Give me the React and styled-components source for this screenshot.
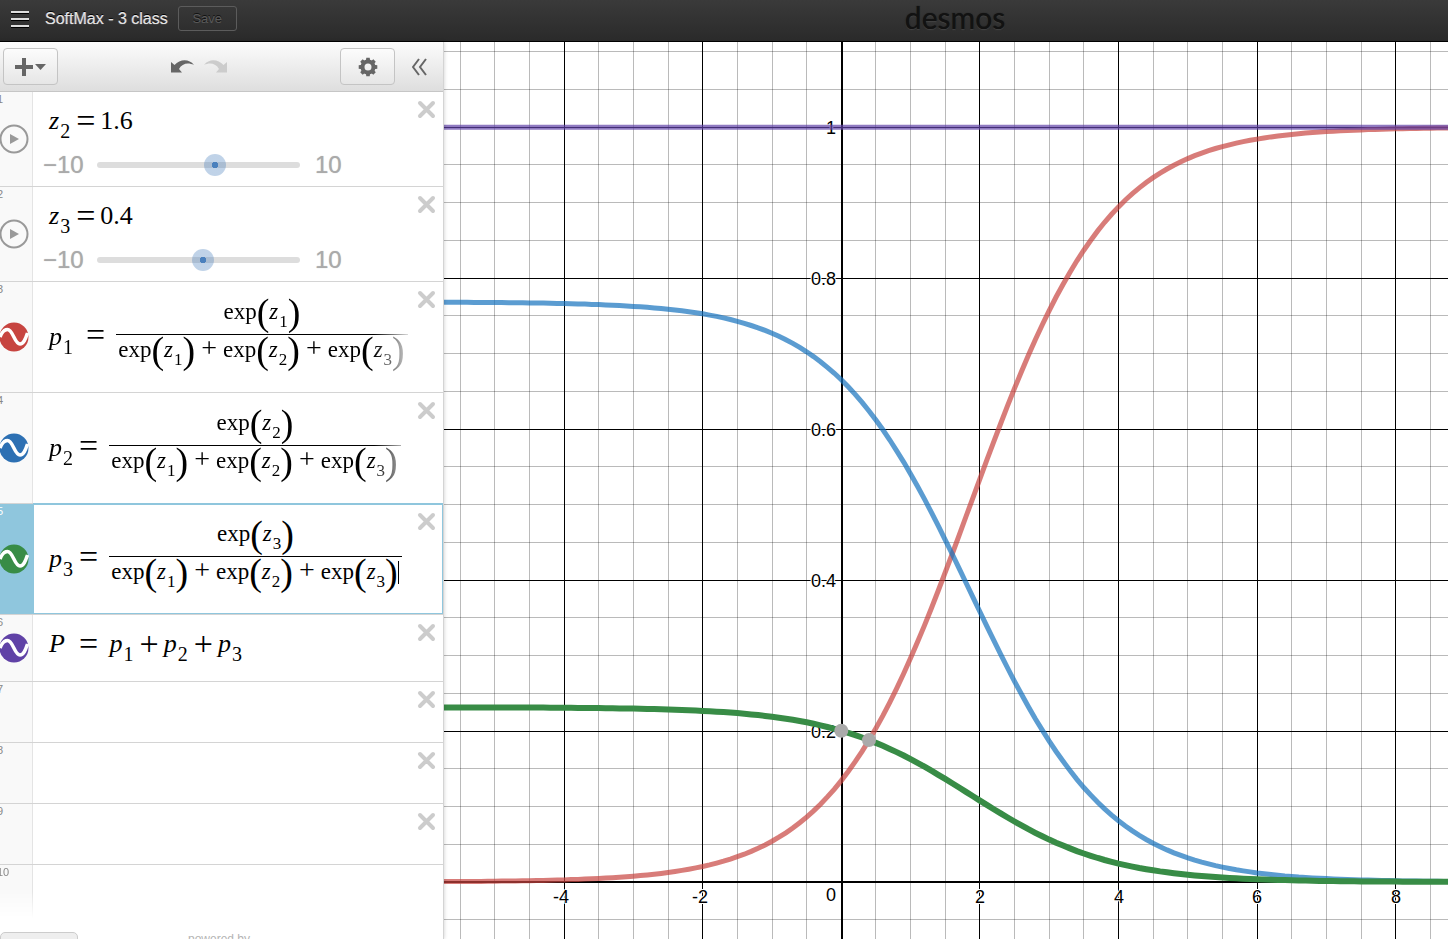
import { useState } from "react"
import styled, { createGlobalStyle } from "styled-components"

const GlobalStyle = createGlobalStyle`
    * {
        box-sizing: border-box;
    }
    body {
        margin: 0;
        overflow: hidden;
        font-family: "Liberation Sans", Arial, sans-serif;
        background: #fff;
    }
    button {
        font-family: inherit;
        padding: 0;
        margin: 0;
        cursor: pointer;
    }
`

const Page = styled.div`
    display: flex;
    flex-direction: column;
    height: 100vh;
    overflow: hidden;
`

const Header = styled.header`
    display: grid;
    grid-template-columns: 444px 1fr;
    align-items: center;
    height: 42px;
    flex: none;
    padding-bottom: 4px;
    background: linear-gradient(#3a3a3a, #2a2a2a);
    border-bottom: 1px solid #000;
`

const HeaderLeft = styled.div`
    display: flex;
    align-items: center;
    padding-left: 11px;
`

const MenuButton = styled.button`
    display: flex;
    border: 0;
    background: none;
    margin-right: 16px;
`

const Title = styled.h1`
    margin: 0 10px 0 0;
    font-size: 16px;
    line-height: 20px;
    font-weight: normal;
    color: #e4e4e4;
    text-shadow: 0 -1px 0 #000, 0 0 1px #e4e4e4;
`

const SaveButton = styled.button`
    width: 59px;
    height: 25px;
    border: 1px solid #5c5c5c;
    border-radius: 3px;
    background: transparent;
    color: #5a5a5a;
    font-size: 13px;
    text-shadow: 0 -1px 0 #111;
`

const Logo = styled.div`
    align-self: start;
    justify-self: center;
    padding-left: 18px;
    font-family: Lato, sans-serif;
    font-size: 30px;
    line-height: 34px;
    color: #121212;
    text-shadow: 0 0 1px #121212, 0 1px 1px #4a4a4a;
`

const Main = styled.main`
    display: flex;
    flex: 1;
    min-height: 0;
`

const Panel = styled.section`
    display: flex;
    flex-direction: column;
    flex: none;
    width: 444px;
    border-right: 1px solid #d4d4d4;
    box-shadow: 0 0 4px rgba(0, 0, 0, 0.2);
    background: #fff;
    z-index: 1;
`

const Toolbar = styled.div`
    display: flex;
    align-items: center;
    justify-content: space-between;
    flex: none;
    height: 50px;
    padding: 0 15px 0 3px;
    background: linear-gradient(#fcfcfc, #dedede);
    border-bottom: 1px solid #c6c6c6;
`

const ToolGroup = styled.div`
    display: flex;
    align-items: center;
    gap: ${props => props.$gap || 0}px;
`

const ToolButton = styled.button`
    display: flex;
    align-items: center;
    justify-content: center;
    gap: 2px;
    width: 55px;
    height: 37px;
    border: 1px solid #c4c4c4;
    border-radius: 4px;
    background: linear-gradient(#fcfcfc, #e6e6e6);
`

const PlainButton = styled.button`
    display: flex;
    border: 0;
    background: none;
`

const List = styled.ol`
    display: flex;
    flex-direction: column;
    flex: 1;
    min-height: 0;
    margin: 0;
    padding: 0;
    list-style: none;
`

const Row = styled.li`
    display: flex;
    flex: ${props => props.$last ? "1" : "none"};
    min-height: ${props => props.$last ? 0 : 61}px;
    border-bottom: ${props => props.$last ? "0" : "1px solid #d4d4d4"};
`

const Gutter = styled.div`
    display: grid;
    align-items: center;
    flex: none;
    width: 33px;
    overflow: hidden;
    border-right: 1px solid ${props => props.$selected ? "#8fc6dd" : "#e4e4e4"};
    background: ${props => props.$selected ? "#8fc6dd" : "#f9f9f9"};
    ${props => props.$fade && "mask-image: linear-gradient(#000 40%, transparent 80%);"}

    > * {
        grid-area: 1 / 1;
    }
`

const Index = styled.span`
    align-self: start;
    margin-left: -3px;
    font-size: 11px;
    line-height: 14px;
    color: ${props => props.$selected ? "#fff" : "#888"};
`

const RoundButton = styled.button`
    display: flex;
    width: 30px;
    height: 30px;
    margin-left: -1px;
    border: 0;
    background: none;
`

const Body = styled.div`
    display: flex;
    flex: 1;
    min-width: 0;
    padding-right: 7px;
    ${props => props.$selected && "box-shadow: inset 0 0 0 1px #8fc6dd, 0 -1px 0 #8fc6dd;"}
`

const Content = styled.div`
    flex: 1;
    min-width: 0;
    overflow: hidden;
    ${props => props.$fade && "mask-image: linear-gradient(to right, #000 calc(100% - 40px), transparent 100%);"}
`

const Close = styled.button`
    display: flex;
    align-self: flex-start;
    flex: none;
    margin: 8px 0 0 3px;
    border: 0;
    background: none;
`

const TermBox = styled.span`
    white-space: nowrap;
`

const Var = styled.i`
    margin-right: 1px;
`

const Sub = styled.span`
    font-size: 20px;
    line-height: 0;
    vertical-align: -9px;
`

const Op = styled.span`
    font-size: 34px;
    line-height: 0;
    margin: 0 5px 0 ${props => props.$wide ? 13 : 6}px;
`

const Formula = styled.div`
    display: flex;
    align-items: center;
    padding: ${props => props.$tall ? "15px 0 20px 16px" : "14px 0 22px 16px"};
    font-family: "Liberation Serif", "Times New Roman", serif;
    font-size: 26px;
    line-height: 30px;
    white-space: nowrap;
    color: #000;

    > ${TermBox} {
        padding-top: ${props => props.$tall ? 4 : 0}px;
    }
`

const Fraction = styled.span`
    display: flex;
    flex-direction: column;
    align-items: center;
    margin-left: 6px;
    font-size: 23px;
    line-height: 30px;

    ${Sub} {
        font-size: 17px;
        vertical-align: -8px;
    }

    ${Op} {
        font-size: 28px;
        margin: 0 6px;
    }
`

const Numerator = styled.span`
    align-self: stretch;
    height: 38px;
    text-align: center;
    border-bottom: 1px solid #000;
`

const Denominator = styled.span`
    height: 37px;
    padding: 0 3px 0 2px;
`

const Paren = styled.span`
    font-size: 38px;
    line-height: 0;
    vertical-align: -6px;
`

const Caret = styled.span`
    display: inline-block;
    width: 1px;
    height: 23px;
    vertical-align: -5px;
    background: #000;
`

const SliderRow = styled.div`
    display: flex;
    align-items: center;
    margin-top: -7px;
    padding: 0 0 7px 10px;
    font-size: 24px;
    line-height: 28px;
    color: #aaa;
    text-shadow: 0 0 1px #bbb;
`

const Limit = styled.span`
    width: ${props => props.$min ? 43 : 30}px;
    margin-left: ${props => props.$min ? 0 : 4}px;
`

const SliderBox = styled.span`
    display: grid;
    align-items: center;
    width: 225px;

    > * {
        grid-area: 1 / 1;
    }
`

const Track = styled.span`
    height: 6px;
    margin: 0 11px;
    border-radius: 3px;
    background: #ddd;
`

const Range = styled.input`
    appearance: none;
    width: 100%;
    height: 22px;
    margin: 0;
    background: none;

    &::-webkit-slider-thumb {
        appearance: none;
        width: 22px;
        height: 22px;
        border-radius: 50%;
        background: radial-gradient(circle, #4a80bd 0 3px, rgba(74, 128, 189, 0.35) 3px);
    }
`

const Footer = styled.footer`
    display: flex;
    align-items: flex-start;
    flex: none;
    height: 7px;
    overflow: hidden;
    gap: 110px;
    font-size: 12px;
    line-height: 14px;
    color: #b4b4b4;
`

const KeypadButton = styled.button`
    flex: none;
    width: 78px;
    height: 30px;
    border: 1px solid #ccc;
    border-radius: 5px;
    background: #eee;
`

const Graph = styled.div`
    flex: 1;
    min-width: 0;
    overflow: hidden;

    svg {
        display: block;
    }
`

const ORIGIN_X = 397.3
const ORIGIN_Y = 840
const UNIT_X = 69.3
const UNIT_Y = 754.8

const px = x => ORIGIN_X + x * UNIT_X
const py = y => ORIGIN_Y - y * UNIT_Y

function range(from, to) {
    let out = []
    for (let i = from; i <= to; i++) out.push(i)
    return out
}

function softmax(x, z2, z3) {
    const e = [Math.exp(x), Math.exp(z2), Math.exp(z3)]
    const sum = e[0] + e[1] + e[2]
    return e.map(v => v / sum)
}

function curve(fn) {
    let d = ""
    for (let x = -6; x <= 22; x += 0.1) {
        d += (d ? "L" : "M") + px(x).toFixed(1) + " " + py(fn(x)).toFixed(1)
    }
    return d
}

function GraphPaper({ z2, z3 }) {
    const cross = softmax(z3, z2, z3)[2]
    return (
        <Graph>
            <svg width="100%" height="100%" fontFamily="Liberation Sans, Arial, sans-serif" fontSize="18">
                <g shapeRendering="crispEdges">
                    {range(-12, 44).filter(i => i !== 0).map(i => {
                        const x = Math.floor(px(i / 2)) + 0.5
                        return <path key={i} d={`M${x} 0V3000`} stroke="#000" strokeOpacity={i % 4 === 0 ? 1 : 0.27} />
                    })}
                    {range(-40, 22).filter(i => i !== 0).map(i => {
                        const y = Math.floor(py(i / 20)) + 0.5
                        return <path key={i} d={`M0 ${y}H3000`} stroke="#000" strokeOpacity={i % 4 === 0 ? 1 : 0.27} />
                    })}
                    <path d="M398 0V3000M0 840H3000" stroke="#000" strokeWidth="2" />
                </g>
                <g stroke="#fff" strokeWidth="2" paintOrder="stroke" strokeLinejoin="round">
                    {[-4, -2, 2, 4, 6, 8].map(n => (
                        <text key={n} x={Math.round(px(n)) - (n < 0 ? 3 : 0)} y="861" textAnchor="middle">{n}</text>
                    ))}
                    {[0.2, 0.4, 0.6, 0.8, 1].map(n => (
                        <text key={n} x="392" y={Math.floor(py(n)) + 7} textAnchor="end">{n}</text>
                    ))}
                    <text x="392" y="859" textAnchor="end">0</text>
                </g>
                <g fill="none" strokeWidth="5" strokeOpacity="0.7">
                    <path d={curve(x => softmax(x, z2, z3)[0])} stroke="#c74440" />
                    <path d={curve(x => softmax(x, z2, z3)[1])} stroke="#1672bd" />
                    <path d={curve(x => softmax(x, z2, z3)[2])} stroke="#388c46" strokeWidth="6" strokeOpacity="1" />
                    <path d={curve(() => 1)} stroke="#6042a6" />
                </g>
                <g fill="#aaa">
                    <circle cx={px(0)} cy={py(softmax(0, z2, z3)[2])} r="7" />
                    <circle cx={px(z3)} cy={py(cross)} r="7" />
                </g>
            </svg>
        </Graph>
    )
}

function Term({ name, sub }) {
    return <TermBox><Var>{name}</Var><Sub>{sub}</Sub></TermBox>
}

function Exp({ n }) {
    return <>exp<Paren>(</Paren><Term name="z" sub={n} /><Paren>)</Paren></>
}

function Softmax({ n, caret }) {
    return (
        <Fraction>
            <Numerator><Exp n={n} /></Numerator>
            <Denominator>
                <Exp n="1" /><Op>+</Op><Exp n="2" /><Op>+</Op><Exp n="3" />
                {caret && <Caret />}
            </Denominator>
        </Fraction>
    )
}

function PlayIcon() {
    return (
        <svg width="30" height="30" viewBox="0 0 30 30">
            <circle cx="15" cy="15" r="13.5" fill="none" stroke="#999" strokeWidth="2" />
            <path d="M11 10L20 15L11 20Z" fill="#999" />
        </svg>
    )
}

function CurveIcon({ color }) {
    return (
        <svg width="30" height="30" viewBox="0 0 30 30">
            <circle cx="15" cy="15" r="14.5" fill={color} />
            <path d="M1 15C3 10 5 7.500 8.500 7.500C14 7.500 15.500 22 21 22C24.500 22 26.500 17 28.500 11" fill="none" stroke="#fff" strokeWidth="3.500" />
        </svg>
    )
}

function Line({ index, color, play, selected, last, fade, children }) {
    return (
        <Row $last={last}>
            <Gutter $selected={selected} $fade={last}>
                <Index $selected={selected}>{index}</Index>
                {play && <RoundButton aria-label="Play"><PlayIcon /></RoundButton>}
                {color && <RoundButton aria-label="Toggle curve"><CurveIcon color={color} /></RoundButton>}
            </Gutter>
            <Body $selected={selected}>
                <Content $fade={fade}>{children}</Content>
                {!last && <Close aria-label="Delete">
                    <svg width="19" height="19" viewBox="0 0 19 19" stroke="#ccc" strokeWidth="4" strokeLinecap="round">
                        <path d="M3 3L16 16M16 3L3 16" />
                    </svg>
                </Close>}
            </Body>
        </Row>
    )
}

function Slider({ label, value, onChange }) {
    return (
        <SliderRow>
            <Limit $min>−10</Limit>
            <SliderBox>
                <Track />
                <Range type="range" min="-10" max="10" step="0.1" aria-label={label} value={value} onChange={e => onChange(Number(e.target.value))} />
            </SliderBox>
            <Limit>10</Limit>
        </SliderRow>
    )
}

export default function App() {
    const [z2, setZ2] = useState(1.6)
    const [z3, setZ3] = useState(0.4)

    return (
        <Page>
            <GlobalStyle />
            <Header>
                <HeaderLeft>
                    <MenuButton aria-label="Menu">
                        <svg width="18" height="18" viewBox="0 0 18 18" shapeRendering="crispEdges">
                            <path d="M0 3H18M0 10H18M0 17H18" stroke="#000" strokeWidth="2" />
                            <path d="M0 2H18M0 9H18M0 16H18" stroke="#ddd" strokeWidth="2" />
                        </svg>
                    </MenuButton>
                    <Title>SoftMax - 3 class</Title>
                    <SaveButton>Save</SaveButton>
                </HeaderLeft>
                <Logo>desmos</Logo>
            </Header>
            <Main>
                <Panel>
                    <Toolbar>
                        <ToolButton aria-label="Add item">
                            <svg width="18" height="18" viewBox="0 0 18 18" stroke="#666" strokeWidth="4">
                                <path d="M9 0V18M0 9H18" />
                            </svg>
                            <svg width="11" height="7" viewBox="0 0 11 7"><path d="M0 1H11L5.500 7Z" fill="#666" /></svg>
                        </ToolButton>
                        <ToolGroup $gap="10">
                            <PlainButton aria-label="Undo">
                                <svg width="23" height="13" viewBox="0 0 23 13">
                                    <path d="M0 2L3.500 5C9 -1 18 -1.500 23 5C17 2 11 3.500 8 9L11 12.500H0Z" fill="#666" />
                                </svg>
                            </PlainButton>
                            <PlainButton aria-label="Redo">
                                <svg width="23" height="13" viewBox="0 0 23 13">
                                    <path d="M23 2L19.500 5C14 -1 5 -1.500 0 5C6 2 12 3.500 15 9L12 12.500H23Z" fill="#ccc" />
                                </svg>
                            </PlainButton>
                        </ToolGroup>
                        <ToolGroup $gap="17">
                            <ToolButton aria-label="Settings">
                                <svg width="20" height="20" viewBox="-10 -10 20 20">
                                    <circle r="5.500" fill="none" stroke="#666" strokeWidth="4" />
                                    {range(0, 7).map(i => (
                                        <path key={i} d="M-2.200 -6L-1.700 -9.300H1.700L2.200 -6Z" fill="#666" transform={`rotate(${i * 45})`} />
                                    ))}
                                </svg>
                            </ToolButton>
                            <PlainButton aria-label="Hide list">
                                <svg width="16" height="18" viewBox="0 0 16 18" fill="none" stroke="#666" strokeWidth="2">
                                    <path d="M7 1L1 9L7 17M14 1L8 9L14 17" />
                                </svg>
                            </PlainButton>
                        </ToolGroup>
                    </Toolbar>
                    <List>
                        <Line index="1" play>
                            <Formula><Term name="z" sub="2" /><Op>=</Op>{z2}</Formula>
                            <Slider label="z2" value={z2} onChange={setZ2} />
                        </Line>
                        <Line index="2" play>
                            <Formula><Term name="z" sub="3" /><Op>=</Op>{z3}</Formula>
                            <Slider label="z3" value={z3} onChange={setZ3} />
                        </Line>
                        <Line index="3" color="#c74440" fade>
                            <Formula $tall><Term name="p" sub="1" /><Op $wide>=</Op><Softmax n="1" /></Formula>
                        </Line>
                        <Line index="4" color="#2d70b3" fade>
                            <Formula $tall><Term name="p" sub="2" /><Op>=</Op><Softmax n="2" /></Formula>
                        </Line>
                        <Line index="5" color="#388c46" selected>
                            <Formula $tall><Term name="p" sub="3" /><Op>=</Op><Softmax n="3" caret /></Formula>
                        </Line>
                        <Line index="6" color="#6042a6">
                            <Formula>
                                <Var>P</Var><Op $wide>=</Op>&nbsp;
                                <Term name="p" sub="1" /><Op>+</Op><Term name="p" sub="2" /><Op>+</Op><Term name="p" sub="3" />
                            </Formula>
                        </Line>
                        <Line index="7" />
                        <Line index="8" />
                        <Line index="9" />
                        <Line index="10" last />
                    </List>
                    <Footer>
                        <KeypadButton aria-label="Show keypad" />
                        <span>powered by</span>
                    </Footer>
                </Panel>
                <GraphPaper z2={z2} z3={z3} />
            </Main>
        </Page>
    )
}
